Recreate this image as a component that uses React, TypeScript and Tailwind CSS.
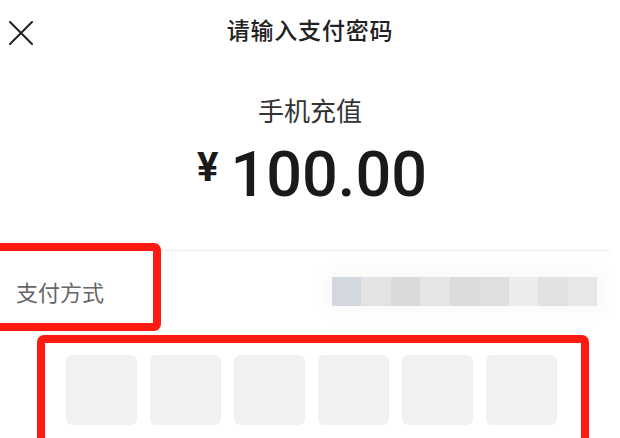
const mosaic = ['#d3d7df', '#e3e3e3', '#dadada', '#e5e5e5', '#dcdcdc', '#dfdfdf', '#ececec', '#e2e2e2', '#e7e7e7'];

export default function App() {
  return (
    <div
      className="relative w-[620px] h-[438px] overflow-hidden bg-white"
      style={{ fontFamily: '"Noto Sans CJK SC", "Noto Sans", sans-serif' }}
    >
      {/* Header */}
      <div className="mt-[21px] h-[24px] grid grid-cols-[1fr_auto_1fr] items-center">
        <div className="pl-[9px] flex items-center">
          <svg width="24" height="24" viewBox="0 0 24 24" fill="none" stroke="#222" strokeWidth="2" strokeLinecap="round">
            <path d="M1 1L23 23M23 1L1 23" />
          </svg>
        </div>
        <div className="text-[23px] leading-[24px] font-medium text-[#222] tracking-[0.8px] -mt-[8px]">请输入支付密码</div>
        <div />
      </div>

      {/* Amount */}
      <div className="mt-[47px] text-center text-[26px] leading-[36px] text-[#333]">手机充值</div>
      <div className="mt-[15px] h-[64px] flex justify-center items-center">
        <div className="flex items-center pl-[4px]" style={{ fontFamily: 'Roboto, "Liberation Sans", Arial, sans-serif' }}>
          <span className="text-[40px] leading-[40px] font-bold text-[#1a1a1a] mr-[12px] -mt-[14px]">¥</span>
          <span className="text-[63px] leading-[64px] font-medium text-[#1a1a1a]">100.00</span>
        </div>
      </div>

      {/* Divider */}
      <div className="mt-[43px] mr-[10px] h-px bg-[#ededed]" />

      {/* Payment method */}
      <div className="h-[80px] flex items-center justify-between pl-[16px] pr-[23px]">
        <span className="text-[22px] leading-[30px] text-[#666]">支付方式</span>
        <div className="flex h-[29px] shadow-[0_0_14px_8px_rgba(0,0,0,0.025)]">
          {mosaic.map((c, i) => (
            <div key={i} className="w-[29.5px] h-full" style={{ backgroundColor: c }} />
          ))}
        </div>
      </div>

      {/* Password cells */}
      <div className="mt-[24px] flex justify-center gap-[13px] pl-[2px]">
        {Array.from({ length: 6 }).map((_, i) => (
          <div key={i} className="w-[71px] h-[70px] rounded-[6px] bg-[#f1f1f1]" />
        ))}
      </div>

      {/* Annotation boxes */}
      <div className="absolute left-[-10px] top-[243px] w-[171px] h-[88px] border-[8px] border-[#ff1a12] rounded-[7px]" />
      <div className="absolute left-[37px] top-[335px] w-[552px] h-[130px] border-[8px] border-[#ff1a12] rounded-[7px]" />
    </div>
  );
}
